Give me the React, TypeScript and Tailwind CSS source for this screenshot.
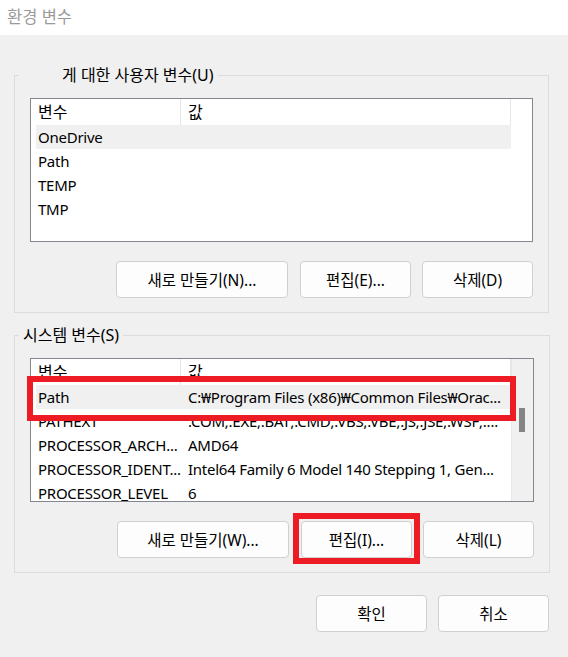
import React from "react";

const font = { fontFamily: '"Noto Sans", "Noto Sans CJK KR", sans-serif' };

type Row = { name: string; value: string; selected?: boolean };

const userVars: Row[] = [
  { name: "OneDrive", value: "", selected: true },
  { name: "Path", value: "" },
  { name: "TEMP", value: "" },
  { name: "TMP", value: "" },
];

const systemVars: Row[] = [
  { name: "Path", value: "C:₩Program Files (x86)₩Common Files₩Orac...", selected: true },
  { name: "PATHEXT", value: ".COM;.EXE;.BAT;.CMD;.VBS;.VBE;.JS;.JSE;.WSF;...." },
  { name: "PROCESSOR_ARCH...", value: "AMD64" },
  { name: "PROCESSOR_IDENT...", value: "Intel64 Family 6 Model 140 Stepping 1, Gen..." },
  { name: "PROCESSOR_LEVEL", value: "6" },
];

function Button({ label, width }: { label: string; width: string }) {
  return (
    <button
      className={`${width} h-[37px] bg-[#fdfdfd] border border-[#d0d0d0] rounded-[4px] text-[15.5px] leading-[20px] text-black flex items-center justify-center`}
    >
      {label}
    </button>
  );
}

function VarList({ rows, scroll }: { rows: Row[]; scroll?: boolean }) {
  return (
    <div className="relative h-[144px] border border-[#828790] bg-white flex overflow-hidden">
      <div className="flex-1 flex flex-col">
        {/* header */}
        <div className="h-[26px] flex shrink-0 text-[16px] leading-[20px]">
          <div className="w-[150px] pl-[7px] border-r border-[#e5e5e5] flex items-center">변수</div>
          <div className="w-[330px] pl-[7px] border-r border-[#e5e5e5] flex items-center">값</div>
        </div>
        {rows.map((r) => (
          <div
            key={r.name}
            className={`ml-[5px] w-[475px] h-[24px] shrink-0 flex items-center text-[15px] leading-[20px] tracking-[-0.25px] text-black whitespace-nowrap ${
              r.selected ? "bg-[#f0f0f0]" : ""
            }`}
          >
            <div className="w-[145px] pl-[2px] overflow-hidden">{r.name}</div>
            <div className="flex-1 pl-[7px] overflow-hidden">{r.value}</div>
          </div>
        ))}
      </div>
      {scroll ? (
        <div className="w-[22px] bg-[#f0f0f0] border-l border-[#e8e8e8] pt-[49px] pl-[7px]">
          <div className="w-[6px] h-[24px] bg-[#858585]" />
        </div>
      ) : null}
    </div>
  );
}

export default function App() {
  return (
    <div className="w-[568px] h-[657px] flex flex-col text-black" style={font}>
      {/* Title bar */}
      <div className="h-[35px] bg-white flex items-center pl-[7px] text-[16.5px] text-[#9b9b9b]">환경 변수</div>

      <div className="flex-1 bg-[#f0f0f0] pl-[14px] pr-[19px] pt-[30px]">
        {/* User variables */}
        <fieldset className="border border-[#dcdcdc]">
          <legend className="ml-[4px] pl-[43px] pr-[4px] text-[16px] leading-[20px]">게 대한 사용자 변수(U)</legend>
          <div className="px-[15px] pt-[13px] pb-[14px]">
            <VarList rows={userVars} />
            <div className="flex justify-end mt-[19px]">
              <Button label="새로 만들기(N)..." width="w-[172px]" />
              <div className="ml-[12px]">
                <Button label="편집(E)..." width="w-[111px]" />
              </div>
              <div className="ml-[11px]">
                <Button label="삭제(D)" width="w-[111px]" />
              </div>
            </div>
          </div>
        </fieldset>

        {/* System variables */}
        <fieldset className="border border-[#dcdcdc] mt-[12px]">
          <legend className="ml-[4px] px-[4px] text-[16px] leading-[20px]">시스템 변수(S)</legend>
          <div className="px-[15px] pt-[13px] pb-[14px]">
            <div className="relative">
              <VarList rows={systemVars} scroll />
              {/* highlight annotation */}
              <div className="absolute left-[-3px] top-[18px] w-[489px] h-[45px] border-[6px] border-[#ed1c24] pointer-events-none" />
            </div>
            <div className="flex justify-end mt-[19px]">
              <Button label="새로 만들기(W)..." width="w-[172px]" />
              <div className="ml-[12px] relative">
                <Button label="편집(I)..." width="w-[111px]" />
                <div className="absolute -left-[8px] -right-[8px] -top-[8px] -bottom-[6px] border-[6px] border-[#ed1c24] pointer-events-none" />
              </div>
              <div className="ml-[11px]">
                <Button label="삭제(L)" width="w-[111px]" />
              </div>
            </div>
          </div>
        </fieldset>

        {/* Dialog buttons */}
        <div className="flex justify-end mt-[22px]">
          <Button label="확인" width="w-[111px]" />
          <div className="ml-[11px]">
            <Button label="취소" width="w-[111px]" />
          </div>
        </div>
      </div>
    </div>
  );
}
